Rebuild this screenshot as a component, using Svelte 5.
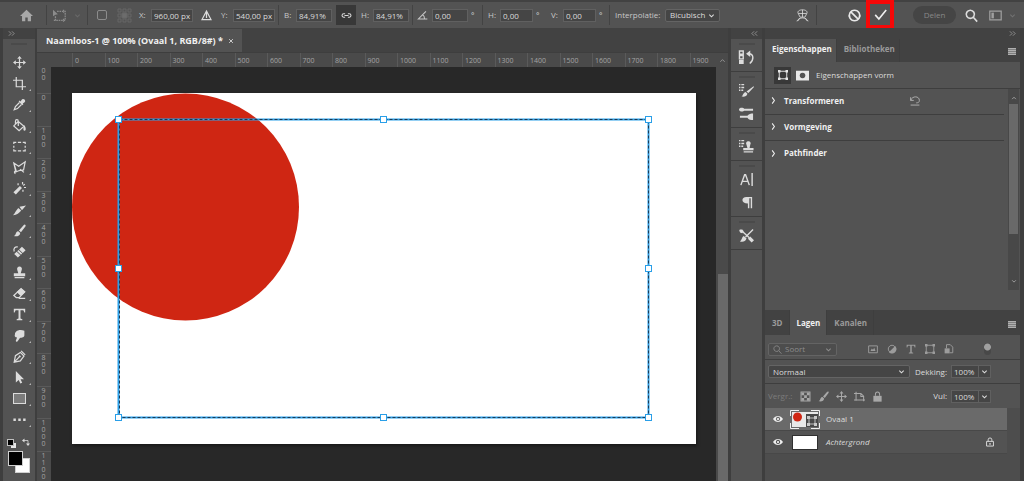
<script lang="ts">
	type Glyph = { fill?: string; stroke?: string };
	type Tool = Glyph & { name: string; single?: boolean };

	const tools: Tool[] = [
		{
			name: 'Verplaatsen',
			single: true,
			fill: 'M8 0l2.800 3.500H5.200zM8 16l-2.800-3.500h5.600zM0 8l3.500-2.800v5.600zM16 8l-3.500 2.800V5.200z',
			stroke: 'M8 3v10M3 8h10'
		},
		{ name: 'Uitsnijden', stroke: 'M0 4h11.500v12M4 0v12h12' },
		{
			name: 'Pipet',
			fill: 'M9.300 4.200l1-1.500a2.800 2.800 0 0 1 3.900-1 2.800 2.800 0 0 1-.7 4.100l-1.400 1 .7.8-1.300 1.300-4.600-4.700L8.200 3.100z',
			stroke: 'M8 5.500L3 10.500 1.500 14.500l4-1.500L10.500 8'
		},
		{
			name: 'Emmertje',
			fill: 'M13.500 7.500c2 2 2.500 4 2 6-.6 1.300-2.200 1.200-2.600 0-.4-1.500.6-4 .6-6z',
			stroke: 'M6.500 3l7 6-6 5.500-6.500-6zM6.500 8.500V3c0-3-3.500-3-3.500 0v3.500'
		},
		{ name: 'Selectiekader', stroke: 'M1 5V3h3M6 3h4M12 3h3v2M15 7v2.500M15 11.500V13.500h-3M10 13.500H6M4 13.500H1v-2M1 9.500V7' },
		{ name: 'Veelhoeklasso', stroke: 'M1 2.500l6 4L15 1l-2 10-6 1-3.500 1.500zM4 12.500L1 2.500M4 12.500c-2.500-.5-3 2-1 3M8.500 10l5 4' },
		{
			name: 'Toverstaf',
			fill: 'M8.500 5l2.500 2.500L3.500 15.500l-3-2.800zM11 0h1.500v3H11zM13.500 6h2.500v1.500h-2.500zM5.500 1.500H7V4H5.500zM14 2l1 1-1.800 1.800-1-1zM11.500 9.500H13V12h-1.500z'
		},
		{ name: 'Segment', fill: 'M6.500 6l3.500 3C7.500 13 5 14.500 0 15c2.500-2.500 3.500-6 6.500-9zM8 4.500L16 3l-5 6z' },
		{
			name: 'Penseel',
			fill: 'M15 .8c.9.600.7 1.700 0 2.600L9.800 10 7.300 8l5.700-6.500c.6-.7 1.400-1.200 2-.7zM6.500 8.800l2.400 2.200c-.2 3.500-3.700 4.700-7.900 3.900 2-.8 2-2.500 2.900-4.200.6-1.300 1.500-1.900 2.600-1.900z'
		},
		{
			name: 'Retoucheerpenseel',
			fill: 'M11 2l4.500 4.500-3.500 3.300-4.500-4.300zM6.800 6.200l4.500 4.300-1.500 1.500-4.600-4.300zM4.500 8.300l4.600 4.300L6 15.500 1.500 11z',
			stroke: 'M1.500 8C0 4 3 1.500 6 2.500'
		},
		{
			name: 'Kloonstempel',
			fill: 'M8 .5a3 3 0 0 1 2.800 4L9.500 9H15v3.500H1V9h5.500L5.200 4.500A3 3 0 0 1 8 .5zM2 13.500h12V15H2z'
		},
		{
			name: 'Gummetje',
			fill: 'M10 1.500L15 6l-5.500 5-5-4.700z',
			stroke: 'M10 2l4.500 4L7.500 13H4L1 10.500zM7 14h8'
		},
		{ name: 'Tekst', fill: 'M1 1h14v4.500h-1L12.800 2.700H9.200v10.300l2.300.9v1.100h-7v-1.100l2.300-.9V2.700H3.200L2 5.500H1z' },
		{
			name: 'Natte vinger',
			fill: 'M4 3C6 1 10 .5 14 2v5.500C14 11 11 10.500 8.500 11L5.500 15.500c-1 .5-2.400-.4-2-1.500L5 10.500C2.500 10.500 1.500 8.500 2.300 7.500L2.500 5z'
		},
		{
			name: 'Pen',
			fill: 'M7.200 7.200a1.300 1.300 0 1 1 1.800 1.800 1.300 1.300 0 0 1-1.800-1.800z',
			stroke: 'M1.500 15l1.500-8L9 3l4.500 4.500-4.500 6zM1.500 15l6-6.200M10 1l5 5'
		},
		{ name: 'Selectie van pad', fill: 'M3.500 0l10 10H9.300l2 4.500-2.300 1-2-4.500-3.500 3z' },
		{ name: 'Rechthoek' },
		{ name: 'Werkbalk bewerken', fill: 'M.5 6.800h3v3h-3zM6.500 6.800h3v3h-3zM12.500 6.800h3v3h-3z' }
	];

	const brush = tools[8].fill;
	const listMarks = 'M0 1h1.500v1.500H0zM2.500 1h3v1.500h-3zM0 4h1.500v1.500H0zM2.500 4h3v1.500h-3zM0 7h1.500v1.500H0zM2.500 7h2v1.500h-2z';
	const frame: Glyph = {
		fill: 'M0 0h4v4H0zM12 0h4v4h-4zM0 12h4v4H0zM12 12h4v4h-4z',
		stroke: 'M2 2h12v12H2z'
	};
	const chevron: Glyph = { stroke: 'M3 6l5 5 5-5' };

	const dock: (Glyph & { name: string })[][] = [
		[
			{
				name: 'Historie',
				fill: 'M0 10.500h5V15H0zM7.500 4L12 .5v7z',
				stroke: 'M.5 1h4v3.500h-4zM.5 6h4v3.500h-4zM10.500 4c5 0 6 6 1 10.500'
			}
		],
		[
			{ name: 'Penseelinstellingen', fill: listMarks + 'M15.500 3.500l.5.700-6 6.500-2-1.700zM7 9.500l2 2c-1 3-3 3.500-6.500 3 2-1 1.500-4 4.500-5z' },
			{ name: 'Penselen', fill: 'M0 4c0-2.500 4.500-2.500 5.500-1H15v2H5.500C4.500 6.500 0 6 0 4zM1 10.500h8c1-2 4-2.500 6-2.500v7c-2 0-5-.5-6-2.500H1z' }
		],
		[
			{ name: 'Bron klonen', fill: listMarks + 'M10 2.500a2.200 2.200 0 0 1 2 3.500l-.7 3.500h4.200V12h-11V9.500H9L8 6a2.200 2.200 0 0 1 2-3.500zM5 13h10v1.500H5z' }
		],
		[
			{ name: 'Teken', stroke: 'M2 14L6 3h1L11 14M3.500 10h6M14 1v14' },
			{ name: 'Alinea', fill: 'M8 2h6v12h-1.500V3.500H11V14H9.500V9C2 9 2 2 8 2z' }
		],
		[
			{
				name: 'Gereedschap',
				fill: 'M1 1.500h2.500l1.500 2-1.500 2-2-.5C0 3 0 2 1 1.500zM12 9l4 4-2.500 2.500L9.500 11.500zM5 8.500l3 2.500c-1 4-4 4-7 3.500 2-1.500 2-5 4-6z',
				stroke: 'M4 4l7 6.500M15 1.500L7 9.500'
			}
		]
	];

	const horizontalMarks = Array.from({ length: 20 }, (_, i) => i * 100);
	const verticalMarks = Array.from({ length: 12 }, (_, i) => String(i * 100));

	const sections = ['Transformeren', 'Vormgeving', 'Pathfinder'];

	const filters: (Glyph & { name: string })[] = [
		{ name: 'Pixellagen', fill: 'M4 11l2-4 2 2 2-3 2 5z', stroke: 'M1 3h14v11H1z' },
		{ name: 'Aanpassingslagen', fill: 'M13 3A7 7 0 0 1 3 13z', stroke: 'M8 2a6 6 0 1 0 .1 0z' },
		{ name: 'Tekstlagen', fill: tools[12].fill },
		{ name: 'Vormlagen', ...frame },
		{ name: 'Slimme objecten', fill: 'M1 7h8v8H1z', stroke: 'M4 7V1h6l4 4v9H9' }
	];

	const locks: (Glyph & { name: string })[] = [
		{ name: 'Transparante pixels', fill: 'M2 2h4v4H2zM10 2h4v4h-4zM6 6h4v4H6zM2 10h4v4H2zM10 10h4v4h-4z', stroke: 'M1.500 1.500h13v13h-13z' },
		{ name: 'Afbeeldingspixels', fill: brush },
		{ name: 'Positie', fill: tools[0].fill, stroke: tools[0].stroke },
		{ name: 'Tekengebied', stroke: 'M3 1v13M0 3.500h10l4 4V15M0 13h16M10 3.500V8h4' },
		{ name: 'Alles', fill: 'M2 7h12v8.500H2z', stroke: 'M5 7V4.500a3 3 0 0 1 6 0V7' }
	];

	const handles = [
		[47, 53],
		[312, 53],
		[577, 53],
		[47, 202],
		[577, 202],
		[47, 351],
		[312, 351],
		[577, 351]
	];

	let x = $state('960,00 px');
	let y = $state('540,00 px');
	let width = $state('84,91%');
	let height = $state('84,91%');
	let angle = $state('0,00');
	let skewH = $state('0,00');
	let skewV = $state('0,00');
	let opacity = $state('100%');
	let fill = $state('100%');
	let selected = $state(0);
</script>

{#snippet icon(g: Glyph)}
	<svg class="icon" viewBox="0 0 16 16" aria-hidden="true">
		{#if g.fill}<path class="solid" d={g.fill} />{/if}
		{#if g.stroke}<path class="line" d={g.stroke} />{/if}
	</svg>
{/snippet}

{#snippet menuIcon()}
	<button class="menu" aria-label="Paneelmenu"></button>
{/snippet}

<div class="app">
	<header class="options">
		<button class="home" aria-label="Start">
			<svg class="icon" viewBox="0 0 16 16"><path class="solid" d="M8 1l8 7.500h-2.500V15h-4v-4.500h-3V15h-4V8.500H0z" /></svg>
		</button>
		<i class="sep"></i>
		<button class="preset" aria-label="Vrije transformatie">
			<svg class="icon" viewBox="0 0 16 16">
				<path class="solid" d="M0 1l6 5.500-3 .5L0 9z" />
				<path class="line" stroke-dasharray="2 1" d="M5 3h10v11H3V9M13 1v4M13 12v4M1 14h4" />
			</svg>
			<span class="tiny faint">{@render icon(chevron)}</span>
		</button>
		<i class="sep"></i>
		<input class="tick" type="checkbox" aria-label="Referentiepunt" />
		<svg class="grid-icon" viewBox="0 0 15 15" aria-hidden="true">
			<path d="M1 1h3v3H1zM6 1h3v3H6zM11 1h3v3h-3zM1 6h3v3H1zM11 6h3v3h-3zM1 11h3v3H1zM6 11h3v3H6zM11 11h3v3h-3z" />
			<path class="center" d="M5 5h5v5H5z" />
		</svg>
		<label class="field"><span>X:</span><input class="wide" bind:value={x} /></label>
		<button class="delta" aria-label="Relatieve positie">{@render icon({ stroke: 'M8 2.500l5.500 10.500h-11zM8 3v8' })}</button>
		<label class="field"><span>Y:</span><input class="wide" bind:value={y} /></label>
		<i class="sep"></i>
		<label class="field"><span>B:</span><input class="mid" bind:value={width} /></label>
		<button class="link" aria-label="Verhoudingen behouden">
			{@render icon({ stroke: 'M6 5.500H4a2.500 2.500 0 0 0 0 5h2M10 5.500h2a2.500 2.500 0 0 1 0 5h-2M5 8h6' })}
		</button>
		<label class="field"><span>H:</span><input class="mid" bind:value={height} /></label>
		<i class="sep"></i>
		<label class="field angle">
			<span aria-label="Hoek">{@render icon({ stroke: 'M13 2L2 13h13M8 7c2 1 3 3 3 6' })}</span>
			<input class="mid" bind:value={angle} /><b>°</b>
		</label>
		<i class="sep"></i>
		<label class="field"><span>H:</span><input bind:value={skewH} /><b>°</b></label>
		<label class="field"><span>V:</span><input bind:value={skewV} /><b>°</b></label>
		<i class="sep"></i>
		<label class="field interpolation">
			<span>Interpolatie:</span>
			<span class="drop">
				<select><option>Bicubisch</option><option>Bilineair</option></select>
				<span class="tiny">{@render icon(chevron)}</span>
			</span>
		</label>
		<div class="actions">
			<button class="warp" aria-label="Verdraaien">
				{@render icon({ stroke: 'M8 1c-4 0-7 2-5 5l2 4h6l2-4c2-3-1-5-5-5zM8 1v9M3 5.500h10M1 15c2-3 4-4 7-4s5 1 7 4M5 11l-3 4M11 11l3 4' })}
			</button>
			<i class="sep"></i>
			<button class="cancel" aria-label="Annuleren">{@render icon({ stroke: 'M8 1.500a6.500 6.500 0 1 0 .1 0zM3.500 3.500l9 9' })}</button>
			<button class="commit" aria-label="Toepassen">{@render icon({ stroke: 'M1.500 8.500l4.500 5L15 2.500' })}</button>
			<button class="share" disabled>Delen</button>
			<button class="search" aria-label="Zoeken">{@render icon({ stroke: 'M6.500 1.500a5 5 0 1 0 .1 0zM10.500 10.500l4.500 5' })}</button>
			<button class="workspace" aria-label="Werkruimte">
				<svg class="icon" viewBox="0 0 16 16"><path class="line" d="M1 2.500h14v11H1z" /><path class="solid" d="M3 4.500h3v7H3z" /></svg>
				<span class="tiny faint">{@render icon(chevron)}</span>
			</button>
		</div>
	</header>

	<div class="workspace-area">
		<aside class="toolbar">
			<button class="expand" aria-label="Uitvouwen">{@render icon({ stroke: 'M2 3l5 5-5 5M9 3l5 5-5 5' })}</button>
			<div class="tools">
				<i class="grip"></i>
				{#each tools as tool (tool.name)}
					<button class="tool" class:single={tool.single} aria-label={tool.name}>
						{#if tool.name === 'Rechthoek'}
							<i class="rectangle"></i>
						{:else}
							{@render icon(tool)}
						{/if}
					</button>
				{/each}
				<div class="defaults">
					<button class="mini" aria-label="Standaardkleuren"></button>
					<button class="swap" aria-label="Kleuren omwisselen">
						{@render icon({ fill: 'M0 5l5-4v8zM12 16l-4-5h8z', stroke: 'M4 5h8v8' })}
					</button>
				</div>
				<div class="colors">
					<button class="back" aria-label="Achtergrondkleur"></button>
					<button class="front" aria-label="Voorgrondkleur"></button>
				</div>
			</div>
		</aside>

		<main class="document">
			<div class="doc-tabs">
				<div class="doc-tab">
					<span>Naamloos-1 @ 100% (Ovaal 1, RGB/8#) *</span>
					<button aria-label="Sluiten">{@render icon({ stroke: 'M3 3l10 10M13 3L3 13' })}</button>
				</div>
			</div>
			<div class="view">
				<i class="corner"></i>
				<div class="ruler horizontal">
					<div class="marks">
						{#each horizontalMarks as mark (mark)}<span>{mark}</span>{/each}
					</div>
				</div>
				<div class="scroll-top">{@render icon({ stroke: 'M3 11l5-5 5 5' })}</div>
				<div class="ruler vertical">
					<span class="partial">00</span>
					<div class="marks">
						{#each verticalMarks as mark (mark)}<span>{mark}</span>{/each}
					</div>
				</div>
				<div class="canvas">
					<svg class="artwork" viewBox="0 0 624 351" role="img" aria-label="Ovaal 1">
						<rect width="624" height="351" fill="#fff" />
						<circle cx="113.500" cy="114" r="113.500" fill="#cf2613" />
						<g transform="translate(-0.5 -26.5)">
							<rect class="path" x="47" y="53" width="530" height="298" />
							<rect class="ants" x="48" y="53" width="529" height="298" />
							{#each handles as [hx, hy]}
								<rect class="handle" x={hx - 3} y={hy - 3} width="6" height="6" />
							{/each}
						</g>
					</svg>
				</div>
				<div class="scroll-side"><i></i></div>
			</div>
		</main>

		<aside class="dock">
			<button class="expand" aria-label="Uitvouwen">{@render icon({ stroke: 'M7 3L2 8l5 5M14 3L9 8l5 5' })}</button>
			{#each dock as group}
				<div class="dock-group">
					<i class="grip"></i>
					{#each group as item (item.name)}
						<button aria-label={item.name}>{@render icon(item)}</button>
					{/each}
				</div>
			{/each}
			<div class="dock-rest"></div>
		</aside>

		<aside class="panels">
			<button class="expand" aria-label="Samenvouwen">{@render icon({ stroke: 'M2 3l5 5-5 5M9 3l5 5-5 5' })}</button>
			<section class="properties">
				<div class="tabs">
					<button class="active">Eigenschappen</button>
					<button>Bibliotheken</button>
					{@render menuIcon()}
				</div>
				<div class="kind">
					<button class="active" aria-label="Vorm">{@render icon(frame)}</button>
					<button aria-label="Masker">
						<svg class="icon" viewBox="0 0 16 16"><path class="solid" fill-rule="evenodd" d="M0 2h16v12H0zM8 4.500a3.500 3.500 0 1 0 .1 0z" /></svg>
					</button>
					<span>Eigenschappen vorm</span>
				</div>
				<div class="sections">
					<div class="list">
						{#each sections as section, i (section)}
							<div class="section">
								<button><span class="tiny">{@render icon({ stroke: 'M5 1l5 7-5 7' })}</span>{section}</button>
								{#if i === 0}
									<button class="reset" aria-label="Herstellen">
										{@render icon({ stroke: 'M1 7h5M1 7V2M1 7C4-1 15 0 15 7c0 3-2 4-5 4M1 14.500h14' })}
									</button>
								{/if}
							</div>
						{/each}
					</div>
					<div class="scrollbar">
						{@render icon({ stroke: 'M3 11l5-5 5 5' })}
						<i></i>
						{@render icon(chevron)}
					</div>
				</div>
			</section>

			<section class="layers">
				<div class="tabs">
					<button>3D</button>
					<button class="active">Lagen</button>
					<button>Kanalen</button>
					{@render menuIcon()}
				</div>
				<div class="row filter">
					<span class="drop kind-filter">
						{@render icon({ stroke: 'M6.500 1.500a5 5 0 1 0 .1 0zM10.500 10.500l4.500 5' })}
						<select aria-label="Filtertype"><option>Soort</option></select>
						<span class="tiny">{@render icon(chevron)}</span>
					</span>
					<div class="icons">
						{#each filters as item (item.name)}
							<button aria-label={item.name}>{@render icon(item)}</button>
						{/each}
					</div>
					<button class="toggle" aria-label="Filter aan"></button>
				</div>
				<div class="row blend">
					<span class="drop mode">
						<select aria-label="Overvloeimodus"><option>Normaal</option><option>Vermenigvuldigen</option></select>
						<span class="tiny">{@render icon(chevron)}</span>
					</span>
					<label class="percent">
						<span>Dekking:</span><input bind:value={opacity} />
						<b class="tiny">{@render icon(chevron)}</b>
					</label>
				</div>
				<div class="row lock">
					<span class="dim">Vergr.:</span>
					<div class="icons">
						{#each locks as item (item.name)}
							<button aria-label={item.name}>{@render icon(item)}</button>
						{/each}
					</div>
					<label class="percent">
						<span>Vul:</span><input bind:value={fill} />
						<b class="tiny">{@render icon(chevron)}</b>
					</label>
				</div>
				<div class="layer-list">
					{#each ['Ovaal 1', 'Achtergrond'] as name, i (name)}
						<div class="layer" class:selected={selected === i}>
							<button class="eye" aria-label="Zichtbaarheid">
								<svg class="icon" viewBox="0 0 16 16">
									<path class="solid" fill-rule="evenodd" d="M0 8c4-6.500 12-6.500 16 0-4 6.500-12 6.500-16 0zM8 4.500a3.500 3.500 0 1 0 .1 0z" />
									<circle class="solid" cx="8" cy="8" r="1.800" />
								</svg>
							</button>
							<button class="name" class:italic={i === 1} onclick={() => (selected = i)}>
								{#if i === 0}
									<svg class="thumb" viewBox="0 0 30 19" aria-hidden="true">
										<path d="M2 2h26v15H2z" fill="#e8e8e8" />
										<circle cx="7.500" cy="7" r="4.500" fill="#cf2613" />
										<path d="M16 4h12v13H16z" fill="#484848" />
										<path d="M19 8h6v6h-6z" class="outline" />
										<path d="M17 6h3v3h-3zM24 6h3v3h-3zM17 13h3v3h-3zM24 13h3v3h-3z" fill="#c8c8c8" />
										<path d="M.5 6V.5H9M21 .5h8.500V6M29.500 13v5.500H21M9 18.500H.5V13" class="bracket" />
									</svg>
								{:else}
									<i class="blank"></i>
								{/if}
								<span>{name}</span>
							</button>
							{#if i === 1}
								<span class="padlock">
									{@render icon({ fill: 'M7 9.500h2v3H7z', stroke: 'M2.500 7h11v7.500h-11zM5 7V4.500a3 3 0 0 1 6 0V7' })}
								</span>
							{/if}
						</div>
					{/each}
				</div>
			</section>
		</aside>
	</div>
</div>

<style>
	:global(body) {
		margin: 0;
		background: #424242;
	}

	.app {
		--panel: #535353;
		--bar: #424242;
		--edge: #3e3e3e;
		--field: #454545;
		--text: #dcdcdc;
		display: flex;
		flex-direction: column;
		height: 100vh;
		overflow: hidden;
		background: var(--edge);
		color: var(--text);
		font-family: 'Open Sans', 'Noto Sans', sans-serif;
		font-size: 8px;
		line-height: 12px;
	}

	.app * {
		box-sizing: border-box;
	}

	button,
	input,
	select {
		margin: 0;
		padding: 0;
		border: 0;
		background: none;
		color: inherit;
		font: inherit;
	}

	button {
		display: flex;
		flex: none;
		align-items: center;
		justify-content: center;
	}

	.icon {
		display: block;
		flex: none;
		width: 13px;
		height: 13px;
		overflow: visible;
	}

	.solid {
		fill: currentColor;
	}

	.line {
		fill: none;
		stroke: currentColor;
		stroke-width: 1.5;
	}

	.tiny .icon {
		width: 7px;
		height: 7px;
	}

	.tiny .line {
		stroke-width: 2.5;
	}

	.faint {
		opacity: 0.4;
	}

	/* Options bar */
	.options {
		display: flex;
		flex: none;
		align-items: center;
		height: 28px;
		padding: 0 4px 0 3px;
		background: var(--panel);
		border-top: 2px solid var(--bar);
		white-space: nowrap;
	}

	.options > * {
		flex: none;
	}

	.sep {
		flex: none;
		width: 1px;
		height: 20px;
		background: #434343;
	}

	.home {
		width: 43px;
		padding-left: 4px;
		color: #a8a8a8;
	}

	.preset {
		gap: 8px;
		width: 40px;
		color: #8c8c8c;
	}

	.tick {
		width: 10px;
		height: 10px;
		margin: 0 10px 0 9px;
		appearance: none;
		border: 1px solid #8c8c8c;
		border-radius: 2px;
	}

	.grid-icon {
		width: 15px;
		height: 15px;
		margin-right: 2px;
		fill: none;
		stroke: #666;
	}

	.grid-icon .center {
		fill: #6c6c6c;
	}

	.field {
		display: flex;
		align-items: center;
		margin: 0 3px 0 5px;
	}

	.field > span:first-child {
		width: 12px;
		color: #c8c8c8;
	}

	.field input {
		width: 33px;
		height: 13px;
		padding-left: 2px;
		border: 1px solid #606060;
		background: var(--field);
	}

	.field .mid {
		width: 36px;
	}

	.field .wide {
		width: 42px;
	}

	.field b {
		width: 7px;
		margin-left: 3px;
		font-weight: 400;
	}

	.delta {
		width: 20px;
	}

	.link {
		width: 20px;
		height: 20px;
		margin-left: 1px;
		background: #383838;
	}

	.link .icon {
		width: 11px;
		height: 11px;
	}

	.angle {
		margin: 0 4px;
	}

	.field.angle > span:first-child {
		width: 15px;
	}

	.angle .icon {
		width: 11px;
	}

	.field.interpolation > span:first-child {
		width: 50px;
	}

	.drop {
		display: flex;
		align-items: center;
		height: 13px;
		padding: 0 4px;
		border: 1px solid #646464;
		border-radius: 2px;
		background: var(--field);
	}

	.drop select {
		flex: 1;
		min-width: 0;
		appearance: none;
	}

	.interpolation .drop {
		width: 55px;
	}

	.actions {
		display: flex;
		align-items: center;
		margin-left: auto;
	}

	.warp {
		margin-right: 7px;
	}

	.warp .line {
		stroke-width: 1;
	}

	.cancel {
		margin: 0 5px 0 31px;
		color: #e8e8e8;
	}

	.cancel .line,
	.commit .line,
	.search .line {
		stroke-width: 2;
	}

	.commit {
		width: 28px;
		height: 29px;
		margin: -1px 19px 0 0;
		border: 4px solid #f60808;
		color: #f0f0f0;
	}

	.share {
		width: 43px;
		height: 18px;
		margin-right: 9px;
		border-radius: 9px;
		background: #454545;
		color: #888;
	}

	.workspace {
		gap: 7px;
		margin: 0 4px 0 11px;
		color: #a0a0a0;
	}

	/* Columns under the options bar */
	.workspace-area {
		display: flex;
		flex: 1;
		gap: 3px;
		min-height: 0;
		padding: 0 4px 0 3px;
	}

	.expand {
		width: 100%;
		height: 11px;
		background: var(--bar);
		color: #b4b4b4;
	}

	.expand .icon {
		width: 7px;
		height: 7px;
	}

	.grip {
		width: 16px;
		height: 2px;
		background: #4a4a4a;
	}

	.toolbar {
		display: flex;
		flex: none;
		flex-direction: column;
		width: 32px;
		margin-right: -1px;
	}

	.toolbar .expand {
		justify-content: flex-start;
		padding-left: 5px;
	}

	.tools {
		display: flex;
		flex: 1;
		flex-direction: column;
		align-items: center;
		padding-top: 4px;
		background: var(--panel);
	}

	.tools .grip {
		margin-bottom: 7px;
	}

	.tool {
		position: relative;
		width: 26px;
		height: 21px;
	}

	.tool::after {
		position: absolute;
		right: 1px;
		bottom: 3px;
		border: solid transparent;
		border-width: 2px 0 0 2px;
		border-right: 2px solid #b4b4b4;
		content: '';
	}

	.tool.single::after {
		display: none;
	}

	.rectangle {
		width: 13px;
		height: 11px;
		border: 1px solid #dcdcdc;
		background: #7c7c7c;
	}

	.defaults {
		display: flex;
		gap: 9px;
		align-items: center;
		height: 18px;
		margin-top: 3px;
	}

	.mini {
		width: 5px;
		height: 5px;
		background: #000;
		outline: 1px solid #c0c0c0;
		box-shadow: 3px 3px 0 #e8e8e8;
	}

	.swap .icon {
		width: 8px;
		height: 8px;
	}

	.colors {
		position: relative;
		width: 22px;
		height: 22px;
	}

	.colors button {
		position: absolute;
		width: 15px;
		height: 15px;
		border: 1px solid #d0d0d0;
	}

	.front {
		top: 0;
		left: 0;
		background: #000;
	}

	.back {
		right: 0;
		bottom: 0;
		background: #fff;
	}

	/* Document window */
	.document {
		display: flex;
		flex: 1;
		flex-direction: column;
		min-width: 0;
	}

	.doc-tabs {
		display: flex;
		flex: none;
		height: 25px;
		padding-top: 1px;
		border-bottom: 1px solid var(--edge);
		background: var(--bar);
	}

	.doc-tab {
		display: flex;
		align-items: center;
		gap: 5px;
		padding: 0 8px 0 9px;
		background: var(--panel);
		color: #f0f0f0;
		font-weight: 700;
		font-size: 9px;
		white-space: nowrap;
	}

	.doc-tab .icon {
		width: 6px;
		height: 6px;
	}

	.doc-tab .line {
		stroke-width: 2;
	}

	.view {
		display: grid;
		flex: 1;
		grid-template: 14px minmax(0, 1fr) / 14px minmax(0, 1fr) 12px;
		min-height: 0;
	}

	.corner,
	.ruler,
	.scroll-top,
	.scroll-side {
		background: #4a4a4a;
	}

	.ruler {
		overflow: hidden;
		color: #a4a4a4;
		font-size: 7px;
	}

	.marks {
		display: grid;
		flex: none;
	}

	.horizontal {
		padding-left: 21px;
		line-height: 15px;
	}

	.horizontal .marks {
		grid-template-columns: repeat(20, minmax(0, 1fr));
		width: 650px;
	}

	.horizontal span {
		padding-left: 2px;
		border-left: 1px solid #5a5a5a;
	}

	.vertical {
		display: flex;
		flex-direction: column;
		line-height: 7px;
		text-align: center;
	}

	.vertical .marks {
		grid-template-rows: repeat(12, minmax(0, 1fr));
		height: 390px;
	}

	.vertical span {
		width: 14px;
		padding: 0 5px 0 4px;
		border-top: 1px solid #5a5a5a;
		overflow-wrap: anywhere;
	}

	.vertical .partial {
		flex: none;
		height: 26px;
		border: 0;
	}

	.scroll-top {
		display: flex;
		align-items: center;
		justify-content: center;
		color: #b4b4b4;
	}

	.scroll-top .icon {
		width: 7px;
		height: 7px;
	}

	.scroll-side {
		padding: 207px 0 0 2px;
	}

	.scroll-side i {
		display: block;
		height: 100%;
		background: #696969;
	}

	.canvas {
		overflow: hidden;
		padding: 26px 20px 0 21px;
		background: #282828;
	}

	.artwork {
		display: block;
		width: 100%;
		max-width: 624px;
		box-shadow: 1px 2px 3px #181818;
	}

	.path,
	.ants {
		fill: none;
		stroke: #2a9fe8;
		stroke-width: 2;
	}

	.ants {
		stroke: #1c3a54;
		stroke-dasharray: 3 2;
		stroke-width: 1;
	}

	.handle {
		fill: #fff;
		stroke: #2a9fe8;
		stroke-width: 1;
	}

	/* Collapsed panel dock */
	.dock {
		display: flex;
		flex: none;
		flex-direction: column;
		gap: 1px;
		width: 31px;
	}

	.dock .expand {
		justify-content: flex-end;
		margin-bottom: -1px;
		padding-right: 4px;
	}

	.dock-group {
		display: flex;
		flex-direction: column;
		align-items: center;
		padding: 4px 0 2px;
		background: var(--panel);
	}

	.dock-group .grip {
		margin-bottom: 1px;
	}

	.dock-group button {
		width: 100%;
		height: 23px;
	}

	.dock-group .icon {
		width: 15px;
		height: 15px;
	}

	.dock-rest {
		flex: 1;
		background: var(--panel);
	}

	/* Panels */
	.panels {
		display: flex;
		flex: none;
		flex-direction: column;
		width: 255px;
	}

	.panels > .expand {
		justify-content: flex-end;
		padding-right: 4px;
	}

	.tabs {
		display: flex;
		flex: none;
		height: 23px;
		background: var(--bar);
		color: #9a9a9a;
		font-weight: 700;
	}

	.tabs button {
		padding: 0 6px 0 7px;
		border-right: 1px solid var(--edge);
	}

	.properties .tabs button {
		padding: 0 4px 4px 7px;
	}

	.tabs .active {
		background: var(--panel);
		color: #f0f0f0;
	}

	.tabs button.menu {
		width: 8px;
		height: 7px;
		margin: 9px 4px 0 auto;
		padding: 0;
		border: 0;
		background: repeating-linear-gradient(#b0b0b0 0 1px, #808080 1px 2px);
	}

	.properties {
		display: flex;
		flex: 1;
		flex-direction: column;
		background: var(--panel);
	}

	.kind {
		display: flex;
		align-items: center;
		height: 27px;
		padding-left: 9px;
		border-bottom: 1px solid var(--edge);
	}

	.kind button {
		width: 17px;
		height: 17px;
		margin-right: 3px;
		color: #e8e8e8;
	}

	.kind .active {
		background: #383838;
	}

	.kind .icon {
		width: 10px;
		height: 10px;
	}

	.kind button + button .icon {
		width: 13px;
		height: 13px;
	}

	.kind span {
		margin-left: 2px;
	}

	.sections {
		display: flex;
		flex: 1;
		justify-content: space-between;
		margin-bottom: 20px;
	}

	.list {
		flex: 1;
		margin-right: 4px;
	}

	.section {
		display: flex;
		height: 26px;
		padding-bottom: 2px;
		border-bottom: 1px solid var(--edge);
		color: #f0f0f0;
		font-weight: 700;
	}

	.section:last-child {
		border: 0;
	}

	.section button:first-child {
		gap: 7px;
		padding-left: 5px;
	}

	.section .reset {
		margin: 0 84px 0 auto;
		color: #b0b0b0;
	}

	.reset .icon {
		width: 10px;
		height: 10px;
	}

	.scrollbar {
		display: flex;
		flex: none;
		flex-direction: column;
		align-items: center;
		width: 11px;
		margin-right: 1px;
		padding: 6px 0;
		background: #484848;
	}

	.scrollbar i {
		width: 9px;
		height: 130px;
		margin: 3px 0 auto;
		background: #696969;
	}

	.scrollbar .icon {
		width: 6px;
		height: 6px;
	}

	.layers {
		flex: none;
		height: 171px;
		background: #4d4d4d;
	}

	.layers .tabs {
		height: 25px;
	}

	.layers .tabs .menu {
		margin-top: 11px;
	}

	.row {
		display: flex;
		align-items: center;
		justify-content: space-between;
		height: 24px;
		padding: 0 29px 0 3px;
		border-bottom: 1px solid var(--edge);
		background: var(--panel);
	}

	.row.filter {
		height: 25px;
		padding-top: 4px;
	}

	.row.lock {
		border: 0;
	}

	.kind-filter {
		gap: 3px;
		width: 69px;
		color: #8c8c8c;
		background: #4d4d4d;
	}

	.kind-filter > .icon {
		width: 9px;
		height: 9px;
	}

	.icons {
		display: flex;
		gap: 7px;
		color: #a8a8a8;
	}

	.icons .icon {
		width: 11px;
		height: 11px;
	}

	.filter .icons {
		gap: 9px;
		color: #9c9c9c;
	}

	.filter .icons .icon {
		width: 10px;
		height: 10px;
	}

	.toggle {
		width: 7px;
		height: 12px;
		border-radius: 4px;
		background: radial-gradient(circle at 50% 4px, #a0a0a0 3px, #484848 4px);
	}

	.mode {
		width: 142px;
	}

	.percent {
		display: flex;
		align-items: center;
	}

	.percent span {
		margin-right: 4px;
	}

	.percent input {
		width: 28px;
		height: 13px;
		padding-left: 2px;
		border: 1px solid #606060;
		background: var(--field);
	}

	.percent b {
		display: flex;
		align-items: center;
		justify-content: center;
		width: 12px;
		height: 13px;
		border: 1px solid #606060;
		border-left: 0;
		background: var(--field);
	}

	.dim {
		color: #7c7c7c;
	}

	.lock .icons {
		margin-right: auto;
		margin-left: 8px;
	}

	.layer {
		display: flex;
		align-items: center;
		height: 23px;
		margin-right: 13px;
		border-bottom: 1px solid #484848;
		background: var(--panel);
	}

	.layer.selected {
		background: #6a6a6a;
	}

	.eye {
		width: 25px;
		height: 100%;
		color: #f0f0f0;
	}

	.eye .icon {
		width: 10px;
		height: 10px;
	}

	.name {
		gap: 6px;
	}

	.name.italic {
		font-style: italic;
	}

	.thumb {
		width: 30px;
		height: 19px;
	}

	.outline,
	.bracket {
		fill: none;
		stroke: #c0c0c0;
	}

	.bracket {
		stroke: #f0f0f0;
	}

	.blank {
		width: 26px;
		height: 15px;
		margin: 0 2px;
		border: 1px solid #303030;
		background: #fff;
	}

	.padlock {
		margin: 0 12px 0 auto;
	}

	.padlock .icon {
		width: 10px;
		height: 10px;
	}
</style>
